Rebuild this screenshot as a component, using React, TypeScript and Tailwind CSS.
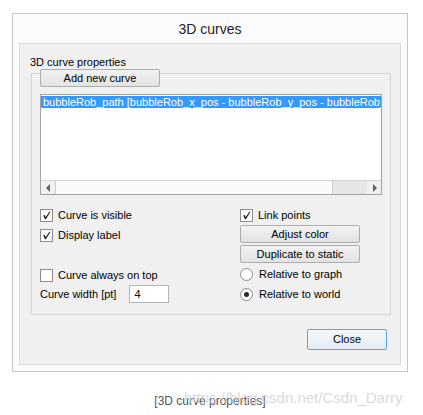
import React from 'react';

const font = { fontFamily: '"Liberation Sans", Arial, sans-serif' };

const CheckBox = ({ checked, label }: { checked: boolean; label: string }) => (
  <div className="flex items-center">
    <div className="w-[13px] h-[13px] border border-[#8c8c8c] bg-white flex items-center justify-center">
      {checked && (
        <svg width="11" height="11" viewBox="0 0 11 11">
          <path d="M2.2 5.6 L3.8 4.9 L4.6 7.2 L8.6 1.6 L9.3 2.1 L4.9 9.3 L4.1 9.3 Z" fill="#1a1a1a" />
        </svg>
      )}
    </div>
    <span className="ml-[5px] text-[11px] leading-[13px] text-black">{label}</span>
  </div>
);

const Radio = ({ checked, label }: { checked: boolean; label: string }) => (
  <div className="flex items-center">
    <div className="w-[13px] h-[13px] rounded-full border border-[#8c8c8c] bg-white flex items-center justify-center">
      {checked && <div className="w-[5px] h-[5px] rounded-full bg-[#2b2b2b]" />}
    </div>
    <span className="ml-[6px] text-[11px] leading-[13px] text-black">{label}</span>
  </div>
);

const Button = ({ label, className = '' }: { label: string; className?: string }) => (
  <div
    className={`h-[18px] border border-[#adadad] rounded-[2px] bg-gradient-to-b from-[#f2f2f2] to-[#e3e3e3] flex items-center justify-center text-[11px] leading-[13px] text-black ${className}`}
  >
    {label}
  </div>
);

const ListBox = () => (
  <div className="mt-[7px] h-[101px] border border-[#a3a3a3] bg-white flex flex-col">
    <div className="flex-1 pt-[1px] overflow-hidden">
      <div className="h-[12px] bg-[#3399ff] text-white text-[11px] leading-[12px] pl-[2px] whitespace-nowrap overflow-hidden">
        bubbleRob_path [bubbleRob_x_pos - bubbleRob_y_pos - bubbleRob_z_pos]
      </div>
    </div>
    {/* horizontal scrollbar */}
    <div className="h-[14px] flex border-t border-[#d4d4d4]">
      <div className="w-[14px] flex items-center justify-center bg-[#f0f0f0]">
        <svg width="5" height="8" viewBox="0 0 5 8">
          <path d="M4 0 L0 4 L4 8 Z" fill="#606060" />
        </svg>
      </div>
      <div className="w-[278px] border-l border-r border-[#cdcdcd] bg-[#fafafa]" />
      <div className="flex-1 bg-[#e6e6e6]" />
      <div className="w-[14px] flex items-center justify-center bg-[#f0f0f0]">
        <svg width="5" height="8" viewBox="0 0 5 8">
          <path d="M1 0 L5 4 L1 8 Z" fill="#606060" />
        </svg>
      </div>
    </div>
  </div>
);

export default function App() {
  return (
    <div className="relative w-[423px] h-[415px] bg-white overflow-hidden" style={font}>
      <div className="ml-[12px] mt-[13px] w-[396px] h-[359px] border border-[#c6c6c6] bg-[#fbfbfb] flex flex-col px-[6px] pb-[6px]">
        <div className="h-[29px] flex items-center justify-center text-[14px] leading-[16px] text-[#1e1e1e] pt-[1px]">
          3D curves
        </div>

        <div className="flex-1 border border-[#dadada] bg-[#f0f0f0] flex flex-col">
          <div className="mt-[12px] pl-[10px] text-[11px] leading-[13px] text-black">3D curve properties</div>

          {/* group box */}
          <div className="mt-[4px] ml-[11px] mr-[9px] h-[242px] border border-[#d5d5d5] px-[8px] flex flex-col">
            <Button label="Add new curve" className="-mt-[5px] w-[120px]" />
            <ListBox />

            <div className="mt-[11px] flex">
              <div className="w-[200px] flex flex-col">
                <div className="h-[19px] flex items-center">
                  <CheckBox checked label="Curve is visible" />
                </div>
                <div className="h-[20px] flex items-center">
                  <CheckBox checked label="Display label" />
                </div>
                <div className="h-[20px]" />
                <div className="h-[20px] flex items-center">
                  <CheckBox checked={false} label="Curve always on top" />
                </div>
                <div className="h-[18px] flex items-center">
                  <span className="text-[11px] leading-[13px] text-black">Curve width [pt]</span>
                  <div className="ml-[13px] w-[40px] h-[18px] border border-[#b4b4b4] bg-white pl-[4px] flex items-center text-[11px] leading-[13px] text-black">
                    4
                  </div>
                </div>
              </div>

              <div className="w-[120px] flex flex-col">
                <div className="h-[19px] flex items-center">
                  <CheckBox checked label="Link points" />
                </div>
                <Button label="Adjust color" />
                <Button label="Duplicate to static" className="mt-[2px]" />
                <div className="h-[22px] flex items-center">
                  <Radio checked={false} label="Relative to graph" />
                </div>
                <div className="h-[18px] flex items-center">
                  <Radio checked label="Relative to world" />
                </div>
              </div>
            </div>
          </div>

          <div className="mt-[14px] self-end mr-[13px] w-[80px] h-[21px] border border-[#5fa3e6] rounded-[2px] bg-gradient-to-b from-[#f7f9fb] to-[#e4ebf3] flex items-center justify-center text-[11px] leading-[13px] text-black">
            Close
          </div>
        </div>
      </div>

      <div className="mt-[22px] ml-[12px] w-[396px] text-center text-[12px] leading-[14px] text-[#555555]">
        [3D curve properties]
      </div>

      {/* watermark */}
      <div className="absolute left-[184px] top-[389px] text-[15px] leading-[17px] text-[#cfcfcf]/80 whitespace-nowrap">
        https://blog.csdn.net/Csdn_Darry
      </div>
    </div>
  );
}
